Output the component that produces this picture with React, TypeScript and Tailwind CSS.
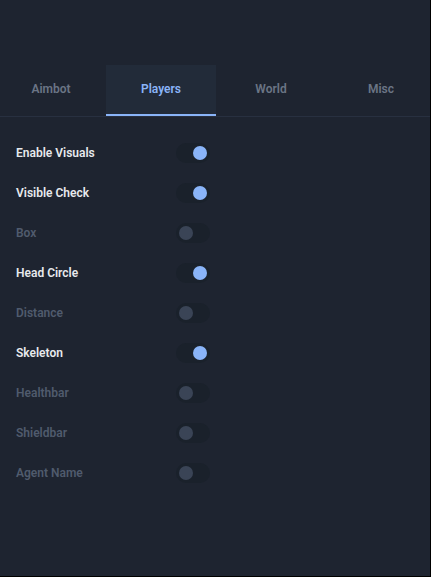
import { useState } from 'react';

const tabs = ['Aimbot', 'Players', 'World', 'Misc'];

const initialOptions = [
  { label: 'Enable Visuals', on: true },
  { label: 'Visible Check', on: true },
  { label: 'Box', on: false },
  { label: 'Head Circle', on: true },
  { label: 'Distance', on: false },
  { label: 'Skeleton', on: true },
  { label: 'Healthbar', on: false },
  { label: 'Shieldbar', on: false },
  { label: 'Agent Name', on: false },
];

function Toggle({ on, onClick }: { on: boolean; onClick: () => void }) {
  return (
    <button
      onClick={onClick}
      className="flex h-[20px] w-[34px] items-center rounded-full bg-[#1a212b] px-[3px]"
    >
      <span
        className={
          on
            ? 'ml-auto h-[14px] w-[14px] rounded-full bg-[#8ab4f8]'
            : 'h-[14px] w-[14px] rounded-full bg-[#3a4456]'
        }
      />
    </button>
  );
}

export default function App() {
  const [active, setActive] = useState('Players');
  const [options, setOptions] = useState(initialOptions);

  const toggle = (i: number) =>
    setOptions((prev) => prev.map((o, idx) => (idx === i ? { ...o, on: !o.on } : o)));

  return (
    <div className="h-[577px] w-[431px] bg-black font-['Roboto',sans-serif]">
      <div className="flex h-[576px] w-[430px] flex-col overflow-hidden bg-[#1e2430]">
        {/* Tabs */}
        <div className="mt-[65px] border-b border-[#283040]">
          <div className="-ml-[4px] flex h-[51px] w-[440px]">
            {tabs.map((t) => (
              <button
                key={t}
                onClick={() => setActive(t)}
                className={
                  t === active
                    ? 'flex w-[110px] items-center justify-center border-b-2 border-[#8ab4f8] bg-[#222b39] pb-[2px] text-[12px] font-semibold text-[#8ab4f8]'
                    : 'flex w-[110px] items-center justify-center border-b-2 border-transparent pb-[2px] text-[12px] font-semibold text-[#6b7585]'
                }
              >
                {t}
              </button>
            ))}
          </div>
        </div>

        {/* Options */}
        <div className="flex flex-col pt-[16px]">
          {options.map((o, i) => (
            <div key={o.label} className="flex h-[40px] items-center pl-4">
              <span
                className={
                  o.on
                    ? 'w-[160px] text-[12px] font-semibold text-[#e8eaed]'
                    : 'w-[160px] text-[12px] font-semibold text-[#505b6d]'
                }
              >
                {o.label}
              </span>
              <Toggle on={o.on} onClick={() => toggle(i)} />
            </div>
          ))}
        </div>
      </div>
    </div>
  );
}
